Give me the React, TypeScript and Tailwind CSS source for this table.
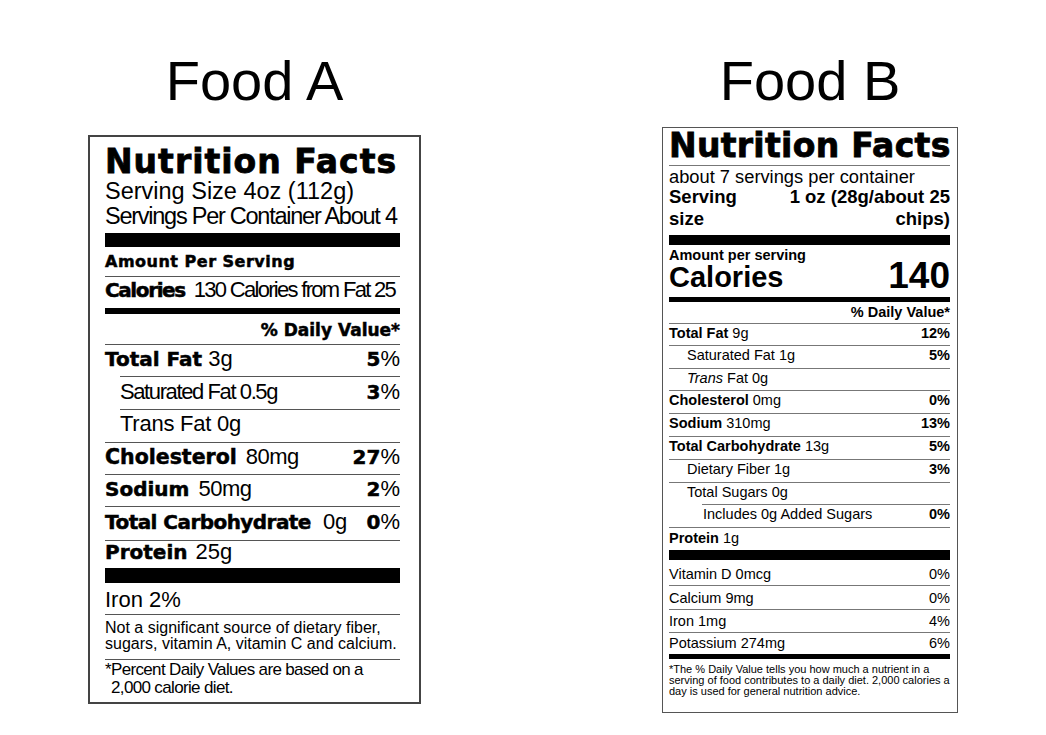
import React from "react";

const LS = "font-['Liberation_Sans',Arial,sans-serif]";
const DJ = "font-['DejaVu_Sans',sans-serif] font-bold [-webkit-text-stroke:0.5px_black]";
const DJT = "font-['DejaVu_Sans',sans-serif] font-bold [-webkit-text-stroke:0.8px_black]";

function FoodA() {
  return (
    <div className="flex flex-col w-[333px]">
      <div className={`${LS} text-center text-[56px] leading-none text-black`}>Food A</div>
      <div className="mt-[26.4px] border-2 border-[#444] pl-[15px] pr-[19px] pt-[8px] pb-[5px] text-black">
        <div className={`${DJT} text-[33px] leading-none tracking-[1px] whitespace-nowrap`}>Nutrition Facts</div>
        <div className={`${LS} mt-[1.4px] text-[23.5px] leading-[25px] whitespace-nowrap`}>
          <div>Serving Size 4oz (112g)</div>
          <div className="tracking-[-1.25px]">Servings Per Container About 4</div>
        </div>
        <div className="mt-[3.6px] h-[14px] bg-black" />
        <div className={`h-[29px] pt-[7.5px] ${DJ} text-[16px] leading-none tracking-[0.5px]`}>Amount Per Serving</div>
        <div className="h-[32px] border-t border-[#555] pt-[2.4px] flex items-baseline leading-none whitespace-nowrap">
          <span className={`${DJ} text-[20px] tracking-[-1.4px]`}>Calories</span>
          <span className={`${LS} text-[22px] tracking-[-1.7px] ml-[9px]`}>130 Calories from Fat 25</span>
        </div>
        <div className="h-[6px] bg-black" />
        <div className={`h-[30px] pt-[7.6px] text-right ${DJ} text-[17px] leading-none`}>% Daily Value*</div>

        <div className="h-[32px] border-t border-[#555] pt-[3.4px] flex items-baseline leading-none whitespace-nowrap">
          <span className={`${DJ} text-[20px]`}>Total Fat</span>
          <span className={`${LS} text-[22px] ml-[6px]`}>3g</span>
          <span className={`${DJ} text-[20px] ml-auto`}>5</span>
          <span className={`${LS} text-[22px]`}>%</span>
        </div>
        <div className="ml-[15px] h-[33px] border-t border-[#555] pt-[4.4px] flex items-baseline leading-none whitespace-nowrap">
          <span className={`${LS} text-[22px] tracking-[-1.4px]`}>Saturated Fat 0.5g</span>
          <span className={`${DJ} text-[20px] ml-auto`}>3</span>
          <span className={`${LS} text-[22px]`}>%</span>
        </div>
        <div className="ml-[15px] h-[33px] border-t border-[#555] pt-[3.4px] flex items-baseline leading-none whitespace-nowrap">
          <span className={`${LS} text-[22px] tracking-[-0.25px]`}>Trans Fat 0g</span>
        </div>
        <div className="h-[32px] border-t border-[#555] pt-[3.4px] flex items-baseline leading-none whitespace-nowrap">
          <span className={`${DJ} text-[20.5px]`}>Cholesterol</span>
          <span className={`${LS} text-[22px] tracking-[-0.5px] ml-[9px]`}>80mg</span>
          <span className={`${DJ} text-[20px] ml-auto`}>27</span>
          <span className={`${LS} text-[22px]`}>%</span>
        </div>
        <div className="h-[32px] border-t border-[#555] pt-[3.4px] flex items-baseline leading-none whitespace-nowrap">
          <span className={`${DJ} text-[20px]`}>Sodium</span>
          <span className={`${LS} text-[22px] tracking-[-0.5px] ml-[9px]`}>50mg</span>
          <span className={`${DJ} text-[20px] ml-auto`}>2</span>
          <span className={`${LS} text-[22px]`}>%</span>
        </div>
        <div className="h-[34px] border-t border-[#555] pt-[4.4px] flex items-baseline leading-none whitespace-nowrap">
          <span className={`${DJ} text-[20px] tracking-[-0.55px]`}>Total Carbohydrate</span>
          <span className={`${LS} text-[22px] ml-[12px]`}>0g</span>
          <span className={`${DJ} text-[20px] ml-auto`}>0</span>
          <span className={`${LS} text-[22px]`}>%</span>
        </div>
        <div className="h-[28px] border-t border-[#555] pt-[0.4px] flex items-baseline leading-none whitespace-nowrap">
          <span className={`${DJ} text-[20px]`}>Protein</span>
          <span className={`${LS} text-[22px] ml-[8px]`}>25g</span>
        </div>
        <div className="h-[15px] bg-black" />
        <div className={`h-[31px] pt-[6.4px] ${LS} text-[22px] leading-none`}>Iron 2%</div>
        <div className={`h-[45px] border-t border-[#555] pt-[5.5px] ${LS} text-[16px] leading-[16px] whitespace-nowrap`}>
          <div>Not a significant source of dietary fiber,</div>
          <div>sugars, vitamin A, vitamin C and calcium.</div>
        </div>
        <div className={`border-t border-[#555] pt-[1.1px] ${LS} text-[17px] leading-[18px] tracking-[-0.65px] whitespace-nowrap`}>
          <div>*Percent Daily Values are based on a</div>
          <div className="pl-[6px]">2,000 calorie diet.</div>
        </div>
      </div>
    </div>
  );
}

function BRow({
  h,
  pt = "pt-[2.4px]",
  indent = "",
  left,
  right,
  border = true,
}: {
  h: string;
  pt?: string;
  indent?: string;
  left: React.ReactNode;
  right?: React.ReactNode;
  border?: boolean;
}) {
  return (
    <div
      className={`${h} ${pt} ${border ? "border-t border-[#777]" : ""} flex justify-between items-baseline leading-none text-[14.5px] whitespace-nowrap`}
    >
      <span className={indent}>{left}</span>
      {right !== undefined && <span className="font-bold">{right}</span>}
    </div>
  );
}

function FoodB() {
  return (
    <div className="flex flex-col w-[296px]">
      <div className={`${LS} text-center text-[56px] leading-none text-black`}>Food B</div>
      <div className={`mt-[18.4px] border border-[#555] pl-[6px] pr-[7px] pb-[15.3px] ${LS} text-black`}>
        <div className="h-[38px] border-b border-[#777] pt-[1.1px]">
          <div className={`${DJT} text-[33px] leading-none tracking-[0.3px] whitespace-nowrap`}>Nutrition Facts</div>
        </div>
        <div className="pt-[1px] text-[18.3px] leading-[19px] whitespace-nowrap">about 7 servings per container</div>
        <div className="flex justify-between font-bold text-[18.5px] leading-[22px] whitespace-nowrap">
          <div>
            Serving
            <br />
            size
          </div>
          <div className="text-right">
            1 oz (28g/about 25
            <br />
            chips)
          </div>
        </div>
        <div className="mt-[5px] h-[10px] bg-black" />
        <div className="flex justify-between items-end">
          <div>
            <div className="pt-[2.7px] text-[14.5px] leading-none font-bold whitespace-nowrap">Amount per serving</div>
            <div className="mt-[1.3px] text-[29px] leading-none font-bold">Calories</div>
          </div>
          <div className="text-[37px] leading-none font-bold mb-[-1.5px]">140</div>
        </div>
        <div className="mt-[4.5px] h-[5px] bg-black" />
        <div className="h-[21px] pt-[2.7px] text-right text-[14.5px] leading-none font-bold">% Daily Value*</div>

        <BRow h="h-[22px]" left={<><b>Total Fat</b> 9g</>} right="12%" />
        <BRow h="h-[23px]" indent="pl-[18px]" left="Saturated Fat 1g" right="5%" />
        <BRow h="h-[22px]" indent="pl-[18px]" left={<><i>Trans</i> Fat 0g</>} />
        <BRow h="h-[23px]" left={<><b>Cholesterol</b> 0mg</>} right="0%" />
        <BRow h="h-[23px]" left={<><b>Sodium</b> 310mg</>} right="13%" />
        <BRow h="h-[23px]" left={<><b>Total Carbohydrate</b> 13g</>} right="5%" />
        <BRow h="h-[23px]" indent="pl-[18px]" left="Dietary Fiber 1g" right="3%" />
        <BRow h="h-[22px]" indent="pl-[18px]" left="Total Sugars 0g" />
        <div className="ml-[33px] h-[23px] pt-[2.4px] border-t border-[#777] flex justify-between items-baseline leading-none text-[14.5px] whitespace-nowrap">
          <span className="pl-[1px]">Includes 0g Added Sugars</span>
          <span className="font-bold">0%</span>
        </div>
        <BRow h="h-[23px]" pt="pt-[2.7px]" left={<><b>Protein</b> 1g</>} />
        <div className="h-[10px] bg-black" />
        <div className="h-[25px] pt-[6.7px] flex justify-between items-baseline leading-none text-[14.5px]">
          <span>Vitamin D 0mcg</span>
          <span>0%</span>
        </div>
        <div className="h-[24px] pt-[4.7px] border-t border-[#777] flex justify-between items-baseline leading-none text-[14.5px]">
          <span>Calcium 9mg</span>
          <span>0%</span>
        </div>
        <div className="h-[23px] pt-[3.7px] border-t border-[#777] flex justify-between items-baseline leading-none text-[14.5px]">
          <span>Iron 1mg</span>
          <span>4%</span>
        </div>
        <div className="h-[22px] pt-[2.7px] border-t border-[#777] flex justify-between items-baseline leading-none text-[14.5px]">
          <span>Potassium 274mg</span>
          <span>6%</span>
        </div>
        <div className="h-[5px] bg-black" />
        <div className="pt-[4.7px] text-[11px] leading-[11px] whitespace-nowrap">
          <div>*The % Daily Value tells you how much a nutrient in a</div>
          <div>serving of food contributes to a daily diet. 2,000 calories a</div>
          <div>day is used for general nutrition advice.</div>
        </div>
      </div>
    </div>
  );
}

export default function App() {
  return (
    <div className="w-[1046px] h-[735px] bg-white flex items-start pl-[88px] pt-[52.6px] gap-[241px] overflow-hidden">
      <FoodA />
      <FoodB />
    </div>
  );
}
